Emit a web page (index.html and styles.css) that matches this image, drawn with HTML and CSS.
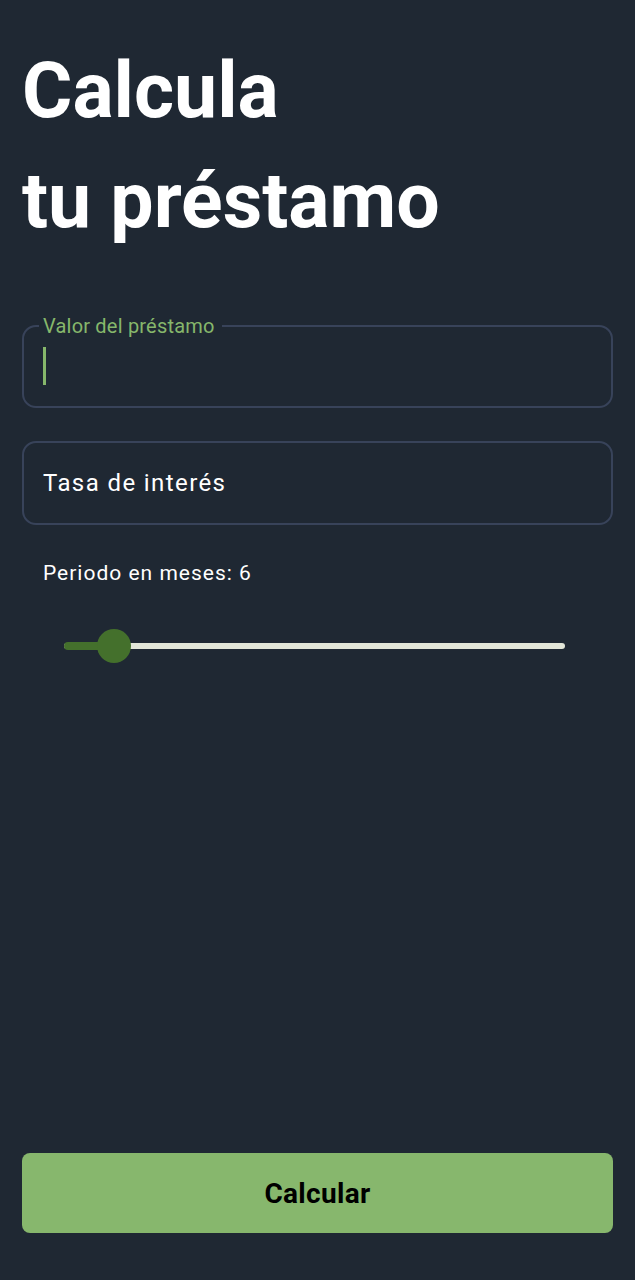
FILE: index.html
```html
<!DOCTYPE html>
<html lang="es">
<head>
<meta charset="utf-8">
<title>Calcula tu préstamo</title>
<link rel="stylesheet" href="styles.css">
</head>
<body>
<main class="screen">
  <h1 class="title">Calcula<br>tu préstamo</h1>

  <fieldset class="field field-focused">
    <legend class="field-label">Valor del préstamo</legend>
    <div class="field-body"><span class="cursor"></span></div>
  </fieldset>

  <div class="field field-plain">
    <span class="placeholder">Tasa de interés</span>
  </div>

  <p class="period">Periodo en meses: 6</p>

  <div class="slider">
    <div class="track">
      <div class="track-active" style="width: 10%"></div>
      <div class="thumb" style="left: 10%"></div>
    </div>
  </div>

  <button class="calc-btn" type="button">Calcular</button>
</main>
</body>
</html>
```

FILE: styles.css
```css
* { box-sizing: border-box; }
html, body {
  margin: 0;
  padding: 0;
  background: #1f2833;
}
body {
  font-family: Roboto, "Noto Sans", "Liberation Sans", sans-serif;
  color: #ffffff;
}
.screen {
  min-height: 1280px;
  padding: 36px 22px 47px 22px;
  display: flex;
  flex-direction: column;
}
.title {
  margin: 0;
  font-size: 77px;
  line-height: 110px;
  font-weight: 700;
  color: #ffffff;
  letter-spacing: 0;
}
.field {
  border: 2px solid #38435a;
  border-radius: 14px;
  margin: 0;
}
.field-focused {
  margin-top: 58px;
  padding: 0 19px;
  min-width: 0;
}
.field-label {
  padding: 0 7px 0 4px;
  margin-left: -4px;
  font-size: 20px;
  line-height: 24px;
  color: #86b76b;
  letter-spacing: 0.2px;
}
.field-body {
  height: 68px;
  padding-top: 9px;
}
.cursor {
  display: block;
  width: 3px;
  height: 38px;
  background: #86b76b;
}
.field-plain {
  margin-top: 33px;
  height: 84px;
  display: flex;
  align-items: center;
  padding-left: 19px;
}
.placeholder {
  font-size: 24px;
  letter-spacing: 1.4px;
  color: #ffffff;
}
.period {
  margin: 35px 0 0 0;
  padding-left: 21px;
  font-size: 21px;
  line-height: 26px;
  letter-spacing: 1px;
  color: #ffffff;
}
.slider {
  margin-top: 43px;
  height: 34px;
  padding: 0 48px 0 42px;
  display: flex;
  align-items: center;
}
.track {
  position: relative;
  width: 100%;
  height: 6px;
  border-radius: 3px;
  background: #e2e6d8;
}
.track-active {
  position: absolute;
  left: 0;
  top: -1px;
  height: 8px;
  border-radius: 4px;
  background: #44702c;
}
.thumb {
  position: absolute;
  top: 50%;
  width: 34px;
  height: 34px;
  margin-left: -17px;
  margin-top: -17px;
  border-radius: 50%;
  background: #44702c;
}
.calc-btn {
  margin-top: auto;
  height: 80px;
  width: 100%;
  border: none;
  border-radius: 8px;
  background: #87b76d;
  color: #000000;
  font-family: Roboto, "Noto Sans", "Liberation Sans", sans-serif;
  font-size: 28px;
  font-weight: 700;
  letter-spacing: 0.3px;
}
```
